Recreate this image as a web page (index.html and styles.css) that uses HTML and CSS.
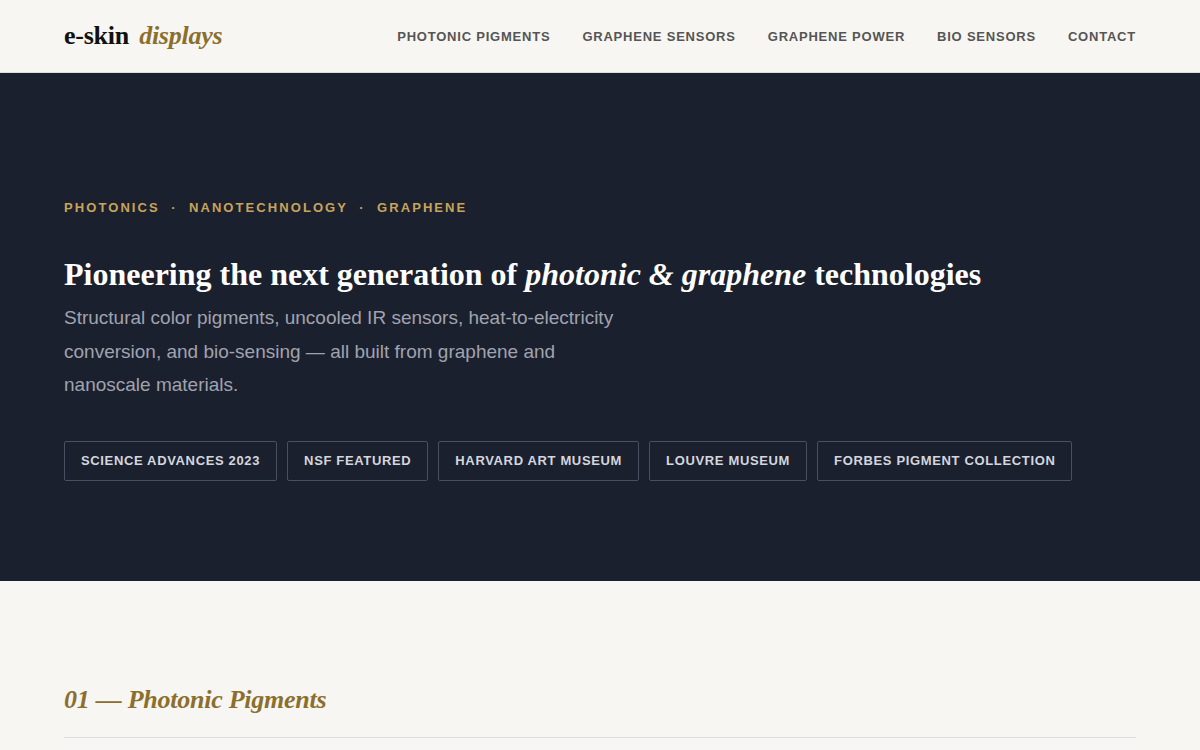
FILE: index.html
```html
<!DOCTYPE html>
<html lang="en">
<head>
    <meta charset="UTF-8">
    <meta name="viewport" content="width=device-width, initial-scale=1.0">
    <title>e-skin displays</title>
    <link rel="stylesheet" href="styles.css">
</head>
<body>

    <!-- Top navigation -->
    <header class="site-header">
        <a class="logo" href="#">e-skin <em>displays</em></a>
        <nav class="main-nav">
            <a href="#pigments">Photonic Pigments</a>
            <a href="#sensors">Graphene Sensors</a>
            <a href="#power">Graphene Power</a>
            <a href="#bio">Bio Sensors</a>
            <a href="#contact">Contact</a>
        </nav>
    </header>

    <!-- Hero -->
    <section class="hero">
        <p class="eyebrow">Photonics &nbsp;·&nbsp; Nanotechnology &nbsp;·&nbsp; Graphene</p>
        <h1>Pioneering the next generation of <em>photonic &amp; graphene</em> technologies</h1>
        <p class="lead">Structural color pigments, uncooled IR sensors, heat-to-electricity conversion, and bio-sensing — all built from graphene and nanoscale materials.</p>
        <div class="badges">
            <span class="badge">Science Advances 2023</span>
            <span class="badge">NSF Featured</span>
            <span class="badge">Harvard Art Museum</span>
            <span class="badge">Louvre Museum</span>
            <span class="badge">Forbes Pigment Collection</span>
        </div>
    </section>

    <!-- Sections -->
    <section class="section" id="pigments">
        <h2>01 — Photonic Pigments</h2>
    </section>

</body>
</html>
```

FILE: styles.css
```css
* {
    box-sizing: border-box;
}
html, body {
    height: 100%;
    overflow: hidden;
}
body {
    margin: 0;
    background: #f8f6f2;
    font-family: "Liberation Sans", Arial, sans-serif;
}
.site-header {
    display: flex;
    justify-content: space-between;
    align-items: center;
    height: 73px;
    padding: 0 64px;
    background: #f8f6f2;
    border-bottom: 1px solid #e0dedb;
}
.logo {
    font-family: "Liberation Serif", "Times New Roman", serif;
    font-size: 26px;
    font-weight: 700;
    letter-spacing: -0.26px;
    color: #111111;
    text-decoration: none;
    word-spacing: 4px;
}
.logo em {
    font-style: italic;
    color: #8b6f2e;
}
.main-nav {
    display: flex;
    gap: 32px;
}
.main-nav a {
    font-size: 13px;
    font-weight: 700;
    letter-spacing: 0.78px;
    text-transform: uppercase;
    text-decoration: none;
    color: #555555;
}
.hero {
    height: 508px;
    padding: 127px 64px 0;
    background: #1b202e;
}
.eyebrow {
    margin: 0 0 33px;
    font-size: 13px;
    font-weight: 700;
    line-height: 15px;
    letter-spacing: 2.08px;
    text-transform: uppercase;
    color: #c8a45a;
}
.hero h1 {
    margin: 0 0 1px;
    font-family: "Liberation Serif", "Times New Roman", serif;
    font-size: 32px;
    font-weight: 700;
    line-height: 52px;
    color: #ffffff;
}
.lead {
    max-width: 560px;
    margin: 0 0 39px;
    font-size: 19px;
    line-height: 33.6px;
    color: #a0a3ae;
}
.badges {
    display: flex;
    gap: 10px;
}
.badge {
    padding: 12px 16px;
    border: 1px solid #4a4e5e;
    border-radius: 2px;
    font-size: 13px;
    font-weight: 700;
    line-height: 14px;
    letter-spacing: 0.65px;
    text-transform: uppercase;
    color: #d4d6de;
}
.section {
    margin: 0 64px;
    padding-top: 101px;
}
.section h2 {
    margin: 0;
    padding-bottom: 19px;
    border-bottom: 1px solid #dddddd;
    font-family: "Liberation Serif", "Times New Roman", serif;
    font-size: 26px;
    font-style: italic;
    font-weight: 700;
    line-height: 36px;
    letter-spacing: -0.26px;
    color: #8b6f2e;
}
```
